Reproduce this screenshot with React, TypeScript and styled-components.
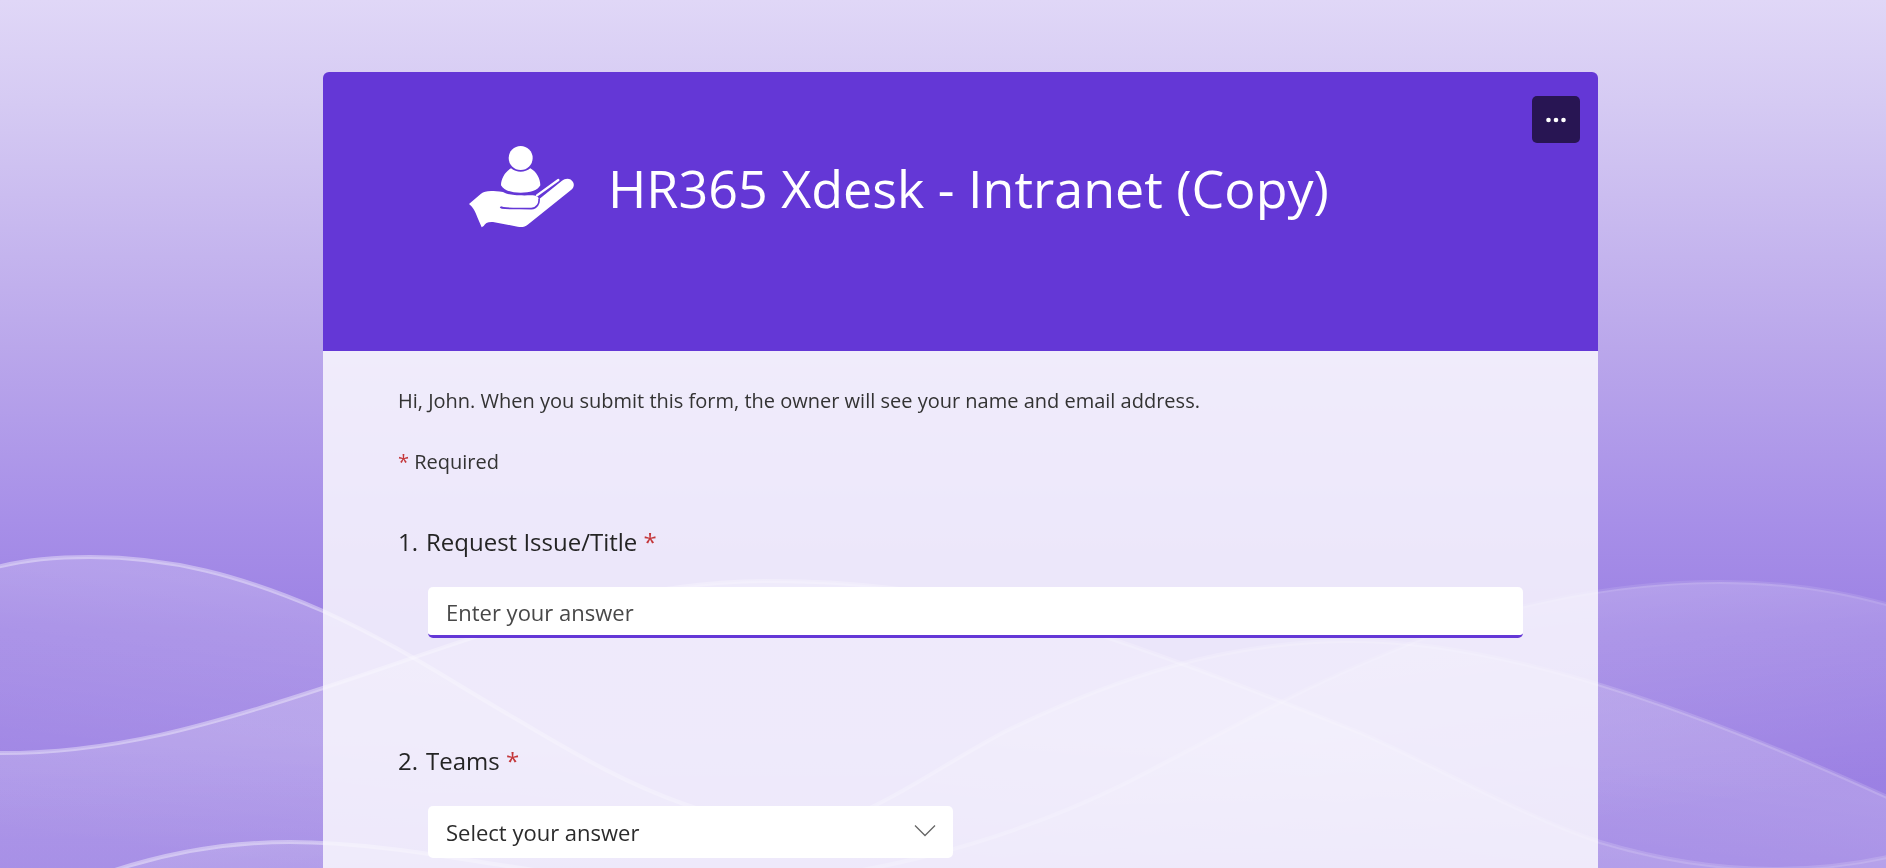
import React from "react";
import styled, { createGlobalStyle } from "styled-components";

const PURPLE = "#6437d6";

const GlobalStyle = createGlobalStyle`
  *, *::before, *::after { box-sizing: border-box; }
  body {
    margin: 0;
    font-family: "Segoe UI", "Open Sans", "Noto Sans", sans-serif;
    color: #242424;
    background: #9c81e3;
  }
`;

const Page = styled.main`
  position: relative;
  display: flex;
  flex-direction: column;
  min-height: 100vh;
  padding: 72px 288px 0 323px;
`;

const Backdrop = styled.svg`
  position: fixed;
  inset: 0;
  width: 100%;
  height: 100%;
  z-index: -1;
`;

const Card = styled.form`
  display: flex;
  flex: 1;
  flex-direction: column;
`;

const Header = styled.header`
  display: flex;
  align-items: flex-start;
  justify-content: space-between;
  min-height: 279px;
  padding: 24px 18px 24px 145px;
  border-radius: 6px 6px 0 0;
  background: ${PURPLE};
`;

const Brand = styled.div`
  display: flex;
  align-items: center;
  gap: 32px;
  padding-top: 49px;
`;

const Logo = styled.svg`
  flex: none;
  width: 108px;
  height: 85px;
`;

const Title = styled.h1`
  margin: 0;
  color: #fff;
  font-size: 52px;
  font-weight: 400;
  line-height: 72px;
`;

const MoreButton = styled.button`
  display: flex;
  flex: none;
  align-items: center;
  justify-content: center;
  width: 48px;
  height: 47px;
  padding: 0;
  border: 0;
  border-radius: 5px;
  background: #281553;
`;

const Body = styled.div`
  flex: 1;
  padding: 36px 75px 10px;
  background: rgba(250, 249, 254, 0.84);
`;

const Note = styled.p`
  margin: 0 0 33px;
  color: #333;
  font-size: 20px;
  line-height: 28px;
`;

const Star = styled.span`
  color: #c4373a;
`;

const Question = styled.section`
  display: grid;
  grid-template-columns: 28px 1fr;
  row-gap: 29px;
  margin-top: 50px;

  & + & {
    margin-top: 107px;
  }
`;

const QuestionLabel = styled.label`
  font-size: 24px;
  line-height: 32px;
`;

const Field = styled.div<{ $width?: string }>`
  position: relative;
  grid-column: 2;
  width: ${(p) => p.$width ?? "100%"};
  padding-left: 2px;
`;

const TextInput = styled.input`
  display: block;
  width: 100%;
  height: 51px;
  padding: 2px 18px 0;
  border: 0;
  border-bottom: 3px solid ${PURPLE};
  border-radius: 5px;
  outline: 0;
  background: #fff;
  color: #242424;
  font: inherit;
  font-size: 22px;

  &::placeholder {
    color: #484848;
    opacity: 1;
  }
`;

const Select = styled.select`
  display: block;
  width: 100%;
  height: 52px;
  padding: 0 48px 0 18px;
  border: 0;
  border-radius: 5px;
  appearance: none;
  background: #fff;
  color: #2b2b2b;
  font: inherit;
  font-size: 22px;
`;

const Chevron = styled.svg`
  position: absolute;
  top: 18px;
  right: 17px;
  width: 22px;
  height: 14px;
  pointer-events: none;
`;

const waves = [
  {
    id: "a",
    line: "M-10 569 C20 560 55 557 90 557 C170 557 240 575 323 611 C400 646 450 681 518 720 C585 760 630 785 684 804 C760 832 820 834 876 805 C920 783 950 761 1004 732 C1120 675 1230 641 1351 641 C1500 641 1690 706 1900 803",
    fill: [0, 556, -35, 826],
    top: 0.2,
    stroke: [0.38, 0.15],
  },
  {
    id: "b",
    line: "M-10 753 C110 755 210 725 323 688 C480 637 610 581 770 581 C890 581 1000 600 1106 637 C1190 665 1270 697 1361 733 C1440 768 1520 815 1600 842 C1660 860 1720 869 1773 869 C1820 869 1860 864 1900 854",
    fill: [0, 740, 0, 1060],
    top: 0.21,
    stroke: [0.38, 0.15],
  },
  {
    id: "c",
    line: "M100 875 C160 854 225 842 290 842 C420 842 560 885 700 885 C850 885 1000 845 1126 783 C1190 750 1235 725 1279 703 C1320 682 1360 664 1402 647 C1490 608 1610 582 1720 582 C1780 582 1840 590 1900 608",
    fill: [1700, 582, 1732, 802],
    top: 0.2,
    stroke: [0.4, 0.1],
  },
];

function WaveBackdrop() {
  return (
    <Backdrop viewBox="0 0 1886 868" preserveAspectRatio="xMidYMid slice" aria-hidden="true">
      <defs>
        <linearGradient id="sky" x1="0" y1="0" x2="0" y2="1">
          <stop offset="0" stopColor="#e0d7f7" />
          <stop offset="0.12" stopColor="#d5caf3" />
          <stop offset="0.4" stopColor="#baa7eb" />
          <stop offset="0.6" stopColor="#a78fe8" />
          <stop offset="0.72" stopColor="#9d82e4" />
          <stop offset="1" stopColor="#9b80e3" />
        </linearGradient>
        {waves.map(({ id, fill, top, stroke }) => (
          <React.Fragment key={id}>
            <linearGradient
              id={`fill-${id}`}
              gradientUnits="userSpaceOnUse"
              x1={fill[0]}
              y1={fill[1]}
              x2={fill[2]}
              y2={fill[3]}
            >
              <stop offset="0" stopColor="#fff" stopOpacity={top} />
              <stop offset="1" stopColor="#fff" stopOpacity="0" />
            </linearGradient>
            <linearGradient
              id={`line-${id}`}
              gradientUnits="userSpaceOnUse"
              x1="300"
              y1="0"
              x2="1500"
              y2="0"
            >
              <stop offset="0" stopColor="#fff" stopOpacity={stroke[0]} />
              <stop offset="1" stopColor="#fff" stopOpacity={stroke[1]} />
            </linearGradient>
          </React.Fragment>
        ))}
      </defs>
      <rect width="1886" height="868" fill="url(#sky)" />
      {waves.map(({ id, line }) => (
        <g key={id}>
          <path d={`${line} V900 H-10 Z`} fill={`url(#fill-${id})`} />
          <path d={line} fill="none" stroke={`url(#line-${id})`} strokeWidth="4" />
        </g>
      ))}
    </Backdrop>
  );
}

function HandLogo() {
  return (
    <Logo viewBox="85 75 324 255" role="img" aria-label="HR365 logo">
      <g fill="#fff">
        <circle cx="243" cy="114" r="36" />
        <path d="M214 145 C196 155 184 176 184 196 C192 212 216 218 243 218 C270 218 294 212 302 196 C302 176 290 155 272 145 C256 159 230 159 214 145 Z" />
        <path d="M88 252 L124 221 C136 212 152 211 190 216 C205 225 225 227 275 226 C288 226 296 229 298 238 L366 183 C380 172 394 176 400 186 C405 195 402 203 394 210 L264 314 C256 321 246 322 234 320 L160 306 C144 305 136 310 132 318 L126 322 L114 294 C106 272 100 262 88 252 Z" />
      </g>
      <path d="M182 261 C188 266 200 265 275 266 C292 265 300 250 298 236" fill="none" stroke={PURPLE} strokeWidth="5" />
      <path d="M292 226 L356 180" fill="none" stroke="#fff" strokeWidth="7" strokeLinecap="round" />
    </Logo>
  );
}

export default function App() {
  return (
    <>
      <GlobalStyle />
      <Page>
        <WaveBackdrop />
        <Card>
          <Header>
            <Brand>
              <HandLogo />
              <Title>HR365 Xdesk - Intranet (Copy)</Title>
            </Brand>
            <MoreButton type="button" aria-label="More options">
              <svg width="20" height="6" viewBox="0 0 20 6" fill="#fff" aria-hidden="true">
                <circle cx="2.5" cy="3" r="2.3" />
                <circle cx="10" cy="3" r="2.3" />
                <circle cx="17.5" cy="3" r="2.3" />
              </svg>
            </MoreButton>
          </Header>
          <Body>
            <Note>Hi, John. When you submit this form, the owner will see your name and email address.</Note>
            <Note>
              <Star>*</Star> Required
            </Note>
            <Question>
              <QuestionLabel as="span">1.</QuestionLabel>
              <QuestionLabel htmlFor="title">
                Request Issue/Title <Star>*</Star>
              </QuestionLabel>
              <Field>
                <TextInput id="title" type="text" placeholder="Enter your answer" required />
              </Field>
            </Question>
            <Question>
              <QuestionLabel as="span">2.</QuestionLabel>
              <QuestionLabel htmlFor="teams">
                Teams <Star>*</Star>
              </QuestionLabel>
              <Field $width="48%">
                <Select id="teams" defaultValue="" required>
                  <option value="">Select your answer</option>
                </Select>
                <Chevron viewBox="0 0 22 14" fill="none" stroke="#666" strokeWidth="1.3" aria-hidden="true">
                  <path d="M1 1.5 L11 11.5 L21 1.5" />
                </Chevron>
              </Field>
            </Question>
          </Body>
        </Card>
      </Page>
    </>
  );
}
